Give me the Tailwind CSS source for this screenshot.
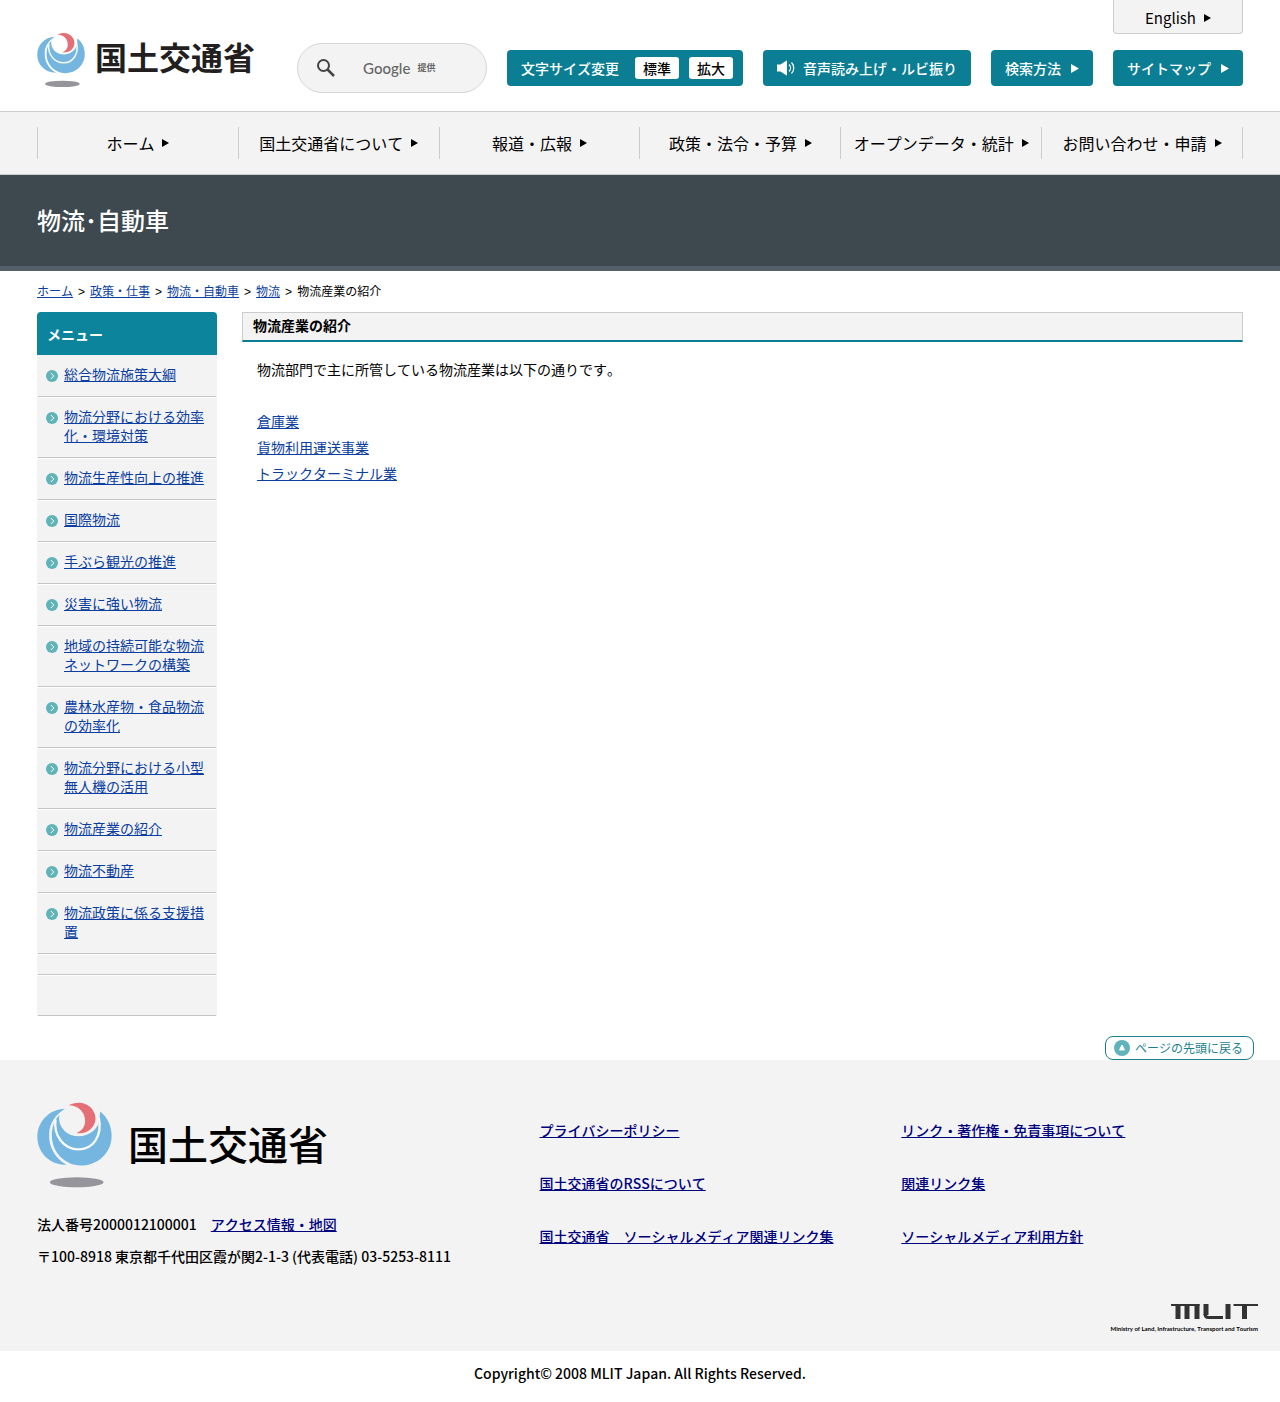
<!doctype html>
<html lang="ja">
  <head>
    <meta charset="UTF-8" />
    <meta name="viewport" content="width=device-width, initial-scale=1.0" />
    <title>物流：物流産業の紹介 - 国土交通省</title>
    <script src="https://cdn.jsdelivr.net/npm/@tailwindcss/browser@4"></script>
  </head>
  <body class="bg-white text-black font-['Noto_Sans_CJK_JP',sans-serif] [font-kerning:none] text-sm">

    <!-- shared symbols -->
    <svg class="hidden" aria-hidden="true">
      <symbol id="emblem" viewBox="54 36 223 256">
        <path fill="#74b6df" d="M137 56C90 57 55 94 55 140c0 46 37 84 87 83C107 203 88 168 90 131c1-33 20-59 47-75z" />
        <path fill="#74b6df" d="M242 64c23 18 34 45 34 73 0 50-41 88-91 88-49 0-87-40-87-90 0-24 9-46 22-60-4 34 20 63 57 63 32 0 58-20 62-46z" />
        <path fill="none" stroke="#f8fafb" stroke-width="7" d="M109 88c-7 48 25 89 68 89 43 0 72-38 61-94" />
        <path fill="#e66e77" d="M148 46c9-5 19-8 30-8 28 0 50 21 50 47 0 25-21 44-48 44-3 0-5 0-8-1 15-5 25-18 25-36 0-26-21-46-49-46z" />
        <ellipse fill="#95959b" cx="172" cy="275" rx="80" ry="15" />
      </symbol>
      <symbol id="tri" viewBox="0 0 7 8">
        <path fill="currentColor" d="M0 0l7 4-7 4z" />
      </symbol>
      <symbol id="bullet" viewBox="0 0 12 12">
        <circle cx="6" cy="6" r="6" fill="#5fb3b9" />
        <path d="M4.800 3l3 3-3 3" fill="none" stroke="#fff" stroke-width="1" />
      </symbol>
    </svg>

    <header class="flex justify-between gap-5 px-[37px] pb-[18px]">
      <a href="#" class="flex items-start gap-2.5 pt-8 text-[#231f20]">
        <svg class="w-12 h-14 shrink-0"><use href="#emblem" /></svg>
        <span class="text-[32px] leading-[48px] font-bold whitespace-nowrap">国土交通省</span>
      </a>
      <div class="flex flex-col items-end">
        <a href="#" class="flex items-center justify-center gap-2 w-[130px] h-[34px] bg-[#f3f3f3] border border-t-0 border-[#ccc] rounded-b pt-0.5 text-[15px] leading-5">English <svg class="w-[7px] h-2"><use href="#tri" /></svg></a>
        <div class="flex items-center gap-5 mt-[9px] text-white font-medium leading-5">
          <form class="relative flex items-center w-[190px] h-[50px] rounded-full border border-[#d6d6d6] bg-[#f3f3f3] pl-[19px] pr-4">
            <button type="button" aria-label="検索" class="shrink-0 text-[#444]">
              <svg class="size-[18px]" viewBox="0 0 18 18" fill="none" stroke="currentColor" stroke-width="2"><circle cx="6.500" cy="6.500" r="5.500" /><path d="M10.500 10.500l6.500 6.500" stroke-width="2.500" /></svg>
            </button>
            <label for="q" class="absolute left-[65px] flex items-center gap-[7px] text-[#666] pointer-events-none">
              <span class="font-['Lato',sans-serif] font-medium text-[15px] leading-5">Google</span>
              <span class="text-[9px] leading-5 font-bold">提供</span>
            </label>
            <input id="q" type="text" class="w-full h-8 ml-3 bg-transparent outline-none text-black" />
          </form>
          <div class="flex items-center gap-2.5 h-9 rounded bg-[#0c7e94] pl-3.5 pr-2.5">
            <span class="mr-1.5 whitespace-nowrap">文字サイズ変更</span>
            <button type="button" class="h-[22px] rounded-[3px] bg-white px-2 text-black whitespace-nowrap">標準</button>
            <button type="button" class="h-[22px] rounded-[3px] bg-white px-2 text-black whitespace-nowrap">拡大</button>
          </div>
          <a href="#" class="flex items-center gap-2 h-9 rounded bg-[#0c7e94] px-3.5 whitespace-nowrap">
            <svg class="w-[18px] h-4" viewBox="0 0 18 16"><path fill="#fff" d="M0 4.500h3.500L10 .2v15.600L3.500 11.500H0z" /><path fill="none" stroke="#fff" stroke-width="1.200" d="M12 4.500c2 2 2 5 0 7M14.500 2.500c3 3 3 8 0 11" /></svg>
            音声読み上げ・ルビ振り
          </a>
          <a href="#" class="flex items-center gap-2.5 h-9 rounded bg-[#0c7e94] px-3.5 whitespace-nowrap">検索方法 <svg class="w-2 h-[9px]"><use href="#tri" /></svg></a>
          <a href="#" class="flex items-center gap-2.5 h-9 rounded bg-[#0c7e94] px-3.5 whitespace-nowrap">サイトマップ <svg class="w-2 h-[9px]"><use href="#tri" /></svg></a>
        </div>
      </div>
    </header>

    <nav class="bg-[#f3f3f3] border-y border-[#ccc] px-[37px] py-[15px]">
      <ul class="grid grid-cols-6 border-l border-[#ccc] text-base leading-8 whitespace-nowrap">
        <li class="border-r border-[#ccc]"><a href="#" class="flex items-center justify-center gap-2">ホーム <svg class="w-[7px] h-2"><use href="#tri" /></svg></a></li>
        <li class="border-r border-[#ccc]"><a href="#" class="flex items-center justify-center gap-2">国土交通省について <svg class="w-[7px] h-2"><use href="#tri" /></svg></a></li>
        <li class="border-r border-[#ccc]"><a href="#" class="flex items-center justify-center gap-2">報道・広報 <svg class="w-[7px] h-2"><use href="#tri" /></svg></a></li>
        <li class="border-r border-[#ccc]"><a href="#" class="flex items-center justify-center gap-2">政策・法令・予算 <svg class="w-[7px] h-2"><use href="#tri" /></svg></a></li>
        <li class="border-r border-[#ccc]"><a href="#" class="flex items-center justify-center gap-2">オープンデータ・統計 <svg class="w-[7px] h-2"><use href="#tri" /></svg></a></li>
        <li class="border-r border-[#ccc]"><a href="#" class="flex items-center justify-center gap-2">お問い合わせ・申請 <svg class="w-[7px] h-2"><use href="#tri" /></svg></a></li>
      </ul>
    </nav>

    <div class="bg-[#3e494f] border-b-[5px] border-[#555f69] px-[37px] pt-[27px] pb-[29px]">
      <p class="text-2xl leading-[35px] font-medium text-white">物流･自動車</p>
    </div>

    <div class="px-[37px] py-2.5 text-[12px] leading-5">
      <a href="#" class="text-[#0a3ea0] underline">ホーム</a><span class="mx-[5px] font-['Liberation_Sans',sans-serif]">&gt;</span><a href="#" class="text-[#0a3ea0] underline">政策・仕事</a><span class="mx-[5px] font-['Liberation_Sans',sans-serif]">&gt;</span><a href="#" class="text-[#0a3ea0] underline">物流・自動車</a><span class="mx-[5px] font-['Liberation_Sans',sans-serif]">&gt;</span><a href="#" class="text-[#0a3ea0] underline">物流</a><span class="mx-[5px] font-['Liberation_Sans',sans-serif]">&gt;</span>物流産業の紹介
    </div>

    <div class="flex items-start gap-[25px] px-[37px]">
      <aside class="w-[180px] shrink-0 bg-[#f3f3f3] rounded-t">
        <h2 class="rounded-t bg-[#0c859c] px-2.5 pt-3 pb-[11px] leading-5 font-bold text-white">メニュー</h2>
        <ul class="px-px leading-[19px] text-[#0a3ea0] underline">
          <li class="flex gap-1.5 border-y border-t-[#f3f3f3] border-b-[#c4c4c4] pt-[9px] pb-3 px-2"><svg class="size-3 mt-[5px] shrink-0"><use href="#bullet" /></svg><a href="#">総合物流施策大綱</a></li>
          <li class="flex gap-1.5 border-y border-t-white border-b-[#c4c4c4] pt-[9px] pb-3 px-2"><svg class="size-3 mt-[5px] shrink-0"><use href="#bullet" /></svg><a href="#">物流分野における効率化・環境対策</a></li>
          <li class="flex gap-1.5 border-y border-t-white border-b-[#c4c4c4] pt-[9px] pb-3 px-2"><svg class="size-3 mt-[5px] shrink-0"><use href="#bullet" /></svg><a href="#">物流生産性向上の推進</a></li>
          <li class="flex gap-1.5 border-y border-t-white border-b-[#c4c4c4] pt-[9px] pb-3 px-2"><svg class="size-3 mt-[5px] shrink-0"><use href="#bullet" /></svg><a href="#">国際物流</a></li>
          <li class="flex gap-1.5 border-y border-t-white border-b-[#c4c4c4] pt-[9px] pb-3 px-2"><svg class="size-3 mt-[5px] shrink-0"><use href="#bullet" /></svg><a href="#">手ぶら観光の推進</a></li>
          <li class="flex gap-1.5 border-y border-t-white border-b-[#c4c4c4] pt-[9px] pb-3 px-2"><svg class="size-3 mt-[5px] shrink-0"><use href="#bullet" /></svg><a href="#">災害に強い物流</a></li>
          <li class="flex gap-1.5 border-y border-t-white border-b-[#c4c4c4] pt-[9px] pb-3 px-2"><svg class="size-3 mt-[5px] shrink-0"><use href="#bullet" /></svg><a href="#">地域の持続可能な物流ネットワークの構築</a></li>
          <li class="flex gap-1.5 border-y border-t-white border-b-[#c4c4c4] pt-[9px] pb-3 px-2"><svg class="size-3 mt-[5px] shrink-0"><use href="#bullet" /></svg><a href="#">農林水産物・食品物流の効率化</a></li>
          <li class="flex gap-1.5 border-y border-t-white border-b-[#c4c4c4] pt-[9px] pb-3 px-2"><svg class="size-3 mt-[5px] shrink-0"><use href="#bullet" /></svg><a href="#">物流分野における小型無人機の活用</a></li>
          <li class="flex gap-1.5 border-y border-t-white border-b-[#c4c4c4] pt-[9px] pb-3 px-2"><svg class="size-3 mt-[5px] shrink-0"><use href="#bullet" /></svg><a href="#">物流産業の紹介</a></li>
          <li class="flex gap-1.5 border-y border-t-white border-b-[#c4c4c4] pt-[9px] pb-3 px-2"><svg class="size-3 mt-[5px] shrink-0"><use href="#bullet" /></svg><a href="#">物流不動産</a></li>
          <li class="flex gap-1.5 border-y border-t-white border-b-[#c4c4c4] pt-[9px] pb-3 px-2"><svg class="size-3 mt-[5px] shrink-0"><use href="#bullet" /></svg><a href="#">物流政策に係る支援措置</a></li>
          <li class="border-y border-t-white border-b-[#c4c4c4] h-[21px]"></li>
          <li class="border-y border-t-white border-b-[#c4c4c4] h-[41px]"></li>
        </ul>
      </aside>

      <main class="flex-1">
        <h1 class="border border-b-2 border-[#ccc] border-b-[#0c7e94] bg-[#f3f3f3] px-2.5 pt-0.5 pb-1 leading-[21px] font-bold">物流産業の紹介</h1>
        <div class="px-[15px] pt-3.5 leading-[26px]">
          <p>物流部門で主に所管している物流産業は以下の通りです。</p>
          <ul class="mt-[26px] text-[#0a3ea0] underline">
            <li><a href="#">倉庫業</a></li>
            <li><a href="#">貨物利用運送事業</a></li>
            <li><a href="#">トラックターミナル業</a></li>
          </ul>
        </div>
      </main>
    </div>

    <div class="flex justify-end pr-[26px] pt-5">
      <a href="#" class="flex items-center gap-[5px] h-6 rounded-lg border border-[#1c7f8e] bg-white pl-2 pr-2.5 text-[12px] leading-5 text-[#1c7f8e]">
        <svg class="size-4" viewBox="0 0 16 16"><circle cx="8" cy="8" r="8" fill="#5fb3b9" /><path d="M8 5l2.500 5h-5z" fill="#fff" stroke="#fff" stroke-linejoin="round" /></svg>
        ページの先頭に戻る
      </a>
    </div>

    <footer>
      <div class="bg-[#f3f3f3] pt-[42px] pb-4 font-medium">
        <div class="grid grid-cols-[25fr_18fr_17fr] px-[37px] leading-8">
          <div>
            <a href="#" class="flex items-start gap-4">
              <svg class="w-[75px] h-[86px] shrink-0"><use href="#emblem" /></svg>
              <span class="text-[40px] leading-[83px] whitespace-nowrap">国土交通省</span>
            </a>
            <p class="mt-5">法人番号2000012100001　<a href="#" class="text-[#00007f] underline">アクセス情報・地図</a></p>
            <p>〒100-8918 東京都千代田区霞が関2-1-3 (代表電話) 03-5253-8111</p>
          </div>
          <ul class="flex flex-col gap-[21px] pt-3 text-[#00007f] underline">
            <li><a href="#">プライバシーポリシー</a></li>
            <li><a href="#">国土交通省のRSSについて</a></li>
            <li><a href="#">国土交通省　ソーシャルメディア関連リンク集</a></li>
          </ul>
          <ul class="flex flex-col gap-[21px] pt-3 text-[#00007f] underline">
            <li><a href="#">リンク・著作権・免責事項について</a></li>
            <li><a href="#">関連リンク集</a></li>
            <li><a href="#">ソーシャルメディア利用方針</a></li>
          </ul>
        </div>
        <div class="flex flex-col items-end pr-[22px] pt-8 text-[#333]">
          <svg class="w-[87px] h-[15px]" viewBox="0 0 87 15" role="img" aria-label="MLIT" fill="none" stroke="currentColor">
            <path d="M0 1h28.500M62.500 1H87" stroke-width="2" />
            <path d="M7 0v15M16 0v15M26 0v15M57 0v15M73.500 0v15" stroke-width="5" />
            <path d="M35 0v11" stroke-width="5" />
            <path d="M34 10q0 3.500 3.500 3.500H52" stroke-width="3" />
          </svg>
          <p class="mt-1 text-[6px] leading-3 font-bold font-['Lato',sans-serif] text-black">Ministry of Land, Infrastructure, Transport and Tourism</p>
        </div>
      </div>
      <p class="pt-3 pb-[19px] text-center leading-5 font-medium">Copyright© 2008 MLIT Japan. All Rights Reserved.</p>
    </footer>

  </body>
</html>
